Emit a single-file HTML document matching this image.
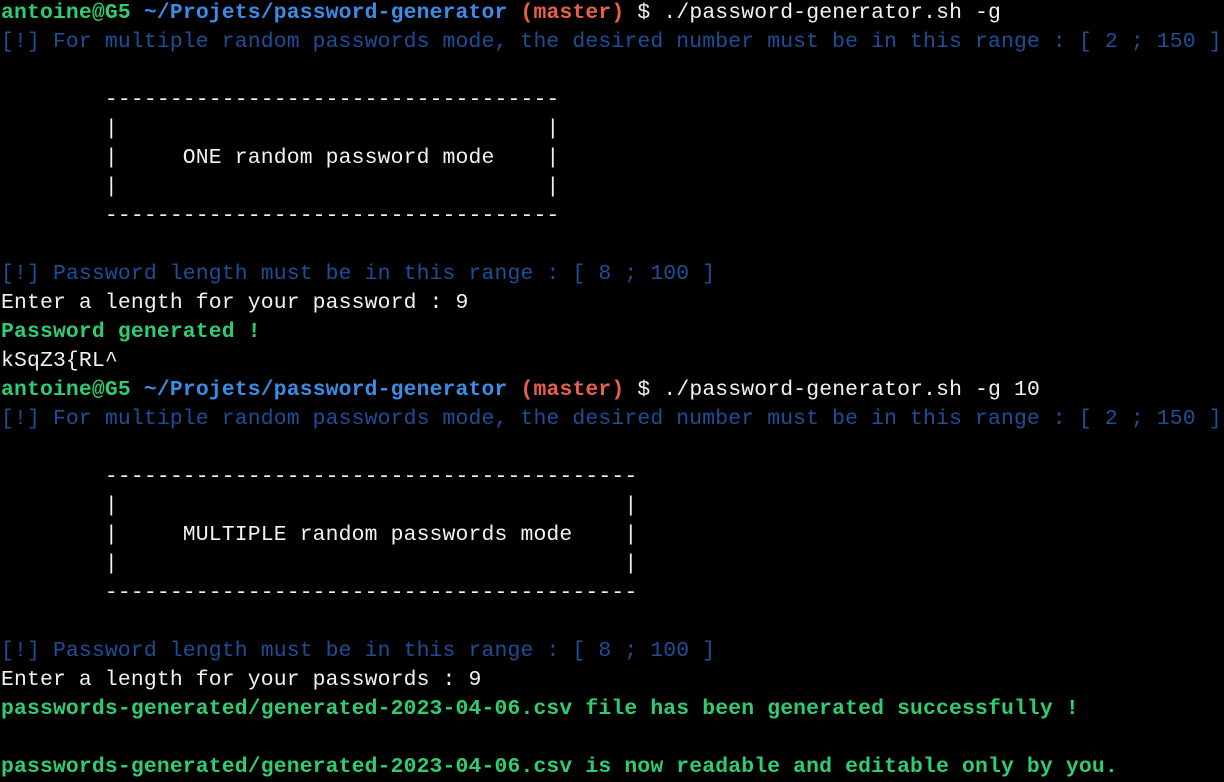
<!DOCTYPE html>
<html><head><meta charset="utf-8"><style>
html,body{margin:0;padding:0;background:#000;width:1224px;height:779px;overflow:hidden}
pre{margin:0;position:absolute;left:1px;top:-1px;font-family:"Liberation Mono","DejaVu Sans Mono",monospace;font-size:21.4px;letter-spacing:0.15px;line-height:29px;color:#f2f2f2;white-space:pre}
.g{color:#2fcc72;font-weight:bold}
.b{color:#3a8de6;font-weight:bold}
.r{color:#e6604c;font-weight:bold}
.d{color:#1f4e98}
</style></head><body><pre><span class="g">antoine@G5</span> <span class="b">~/Projets/password-generator</span> <span class="r">(master)</span> $ ./password-generator.sh -g
<span class="d">[!] For multiple random passwords mode, the desired number must be in this range : [ 2 ; 150 ]</span>

        -----------------------------------
        |                                 |
        |     ONE random password mode    |
        |                                 |
        -----------------------------------

<span class="d">[!] Password length must be in this range : [ 8 ; 100 ]</span>
Enter a length for your password : 9
<span class="g">Password generated !</span>
kSqZ3{RL^
<span class="g">antoine@G5</span> <span class="b">~/Projets/password-generator</span> <span class="r">(master)</span> $ ./password-generator.sh -g 10
<span class="d">[!] For multiple random passwords mode, the desired number must be in this range : [ 2 ; 150 ]</span>

        -----------------------------------------
        |                                       |
        |     MULTIPLE random passwords mode    |
        |                                       |
        -----------------------------------------

<span class="d">[!] Password length must be in this range : [ 8 ; 100 ]</span>
Enter a length for your passwords : 9
<span class="g">passwords-generated/generated-2023-04-06.csv file has been generated successfully !</span>

<span class="g">passwords-generated/generated-2023-04-06.csv is now readable and editable only by you.</span>
</pre></body></html>
